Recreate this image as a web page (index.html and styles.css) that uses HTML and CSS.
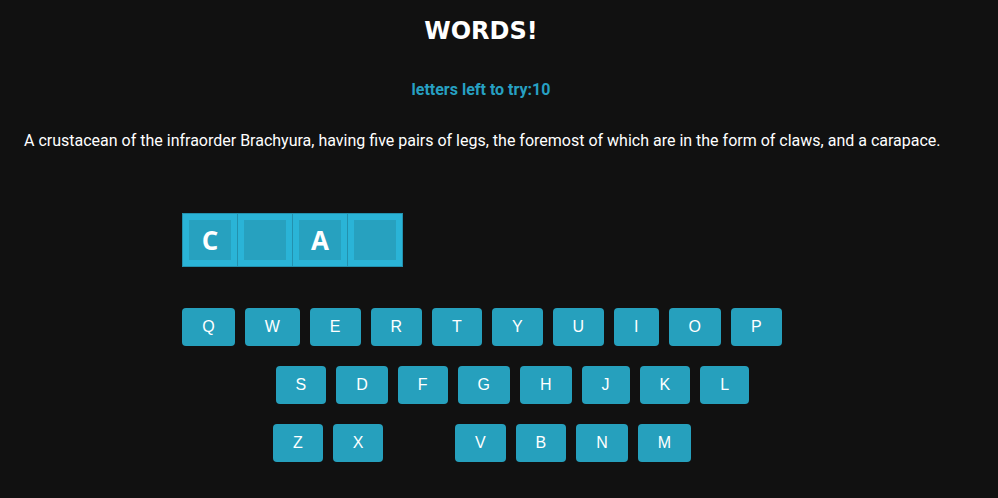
FILE: index.html
```html
<!DOCTYPE html>
<html>
<head>
<meta charset="utf-8">
<link rel="stylesheet" href="styles.css">
</head>
<body>
<div class="page">
  <h1 class="title">WORDS!</h1>
  <p class="tries">letters left to try:10</p>
  <p class="clue">A crustacean of the infraorder Brachyura, having five pairs of legs, the foremost of which are in the form of claws, and a carapace.</p>
  <div class="board">
    <div class="tiles">
      <div class="tile"><span class="tile-inner">C</span></div>
      <div class="tile"><span class="tile-inner"></span></div>
      <div class="tile"><span class="tile-inner">A</span></div>
      <div class="tile"><span class="tile-inner"></span></div>
    </div>
  </div>
  <div class="keyboard">
    <div class="row">
      <button class="key">Q</button><button class="key">W</button><button class="key">E</button><button class="key">R</button><button class="key">T</button><button class="key">Y</button><button class="key">U</button><button class="key">I</button><button class="key">O</button><button class="key">P</button>
    </div>
    <div class="row">
      <button class="key used">A</button><button class="key">S</button><button class="key">D</button><button class="key">F</button><button class="key">G</button><button class="key">H</button><button class="key">J</button><button class="key">K</button><button class="key">L</button>
    </div>
    <div class="row">
      <button class="key">Z</button><button class="key">X</button><button class="key used">C</button><button class="key">V</button><button class="key">B</button><button class="key">N</button><button class="key">M</button>
    </div>
  </div>
</div>
</body>
</html>
```
FILE: styles.css
```css
html, body {
  margin: 0;
  padding: 0;
  background: #111111;
}
body {
  font-family: Roboto, "Liberation Sans", sans-serif;
  color: #ffffff;
}
.page {
  width: 914px;
  margin-left: 24px;
  padding-top: 17px;
}
.title {
  margin: 0;
  text-align: center;
  font-family: "DejaVu Sans", sans-serif;
  font-weight: 700;
  font-size: 24px;
  line-height: 28px;
  color: #ffffff;
}
.tries {
  margin: 35px 0 0;
  text-align: center;
  font-family: Roboto, sans-serif;
  font-weight: 700;
  font-size: 16px;
  line-height: 19px;
  color: #27a0c2;
}
.clue {
  margin: 32px 0 0;
  font-family: Roboto, sans-serif;
  font-size: 16px;
  line-height: 19px;
  color: #ffffff;
  white-space: nowrap;
}
.board {
  width: 600px;
  margin: 63px auto 0;
  padding-left: 1px;
  box-sizing: border-box;
}
.tiles {
  display: flex;
  border-left: 1px solid #2391ae;
  width: max-content;
}
.tile {
  width: 55px;
  height: 54px;
  box-sizing: border-box;
  border: 1px solid #2391ae;
  border-left: none;
  background: #2ab4d7;
  padding: 6px;
}
.tile-inner {
  display: flex;
  align-items: center;
  justify-content: center;
  width: 100%;
  height: 100%;
  background: #27a1bf;
  font-family: "Open Sans", sans-serif;
  font-weight: 700;
  font-size: 26px;
  color: #ffffff;
}
.keyboard {
  margin-top: 41px;
  padding-left: 2px;
  display: flex;
  flex-direction: column;
  align-items: center;
  gap: 20px;
}
.row {
  display: flex;
  justify-content: center;
  gap: 10px;
}
.key {
  height: 38px;
  padding: 0 20px;
  border: none;
  border-radius: 4px;
  background: #26a0bd;
  color: #ffffff;
  font-family: "Liberation Sans", Arial, sans-serif;
  font-size: 16px;
}
.key.used {
  visibility: hidden;
}
```
